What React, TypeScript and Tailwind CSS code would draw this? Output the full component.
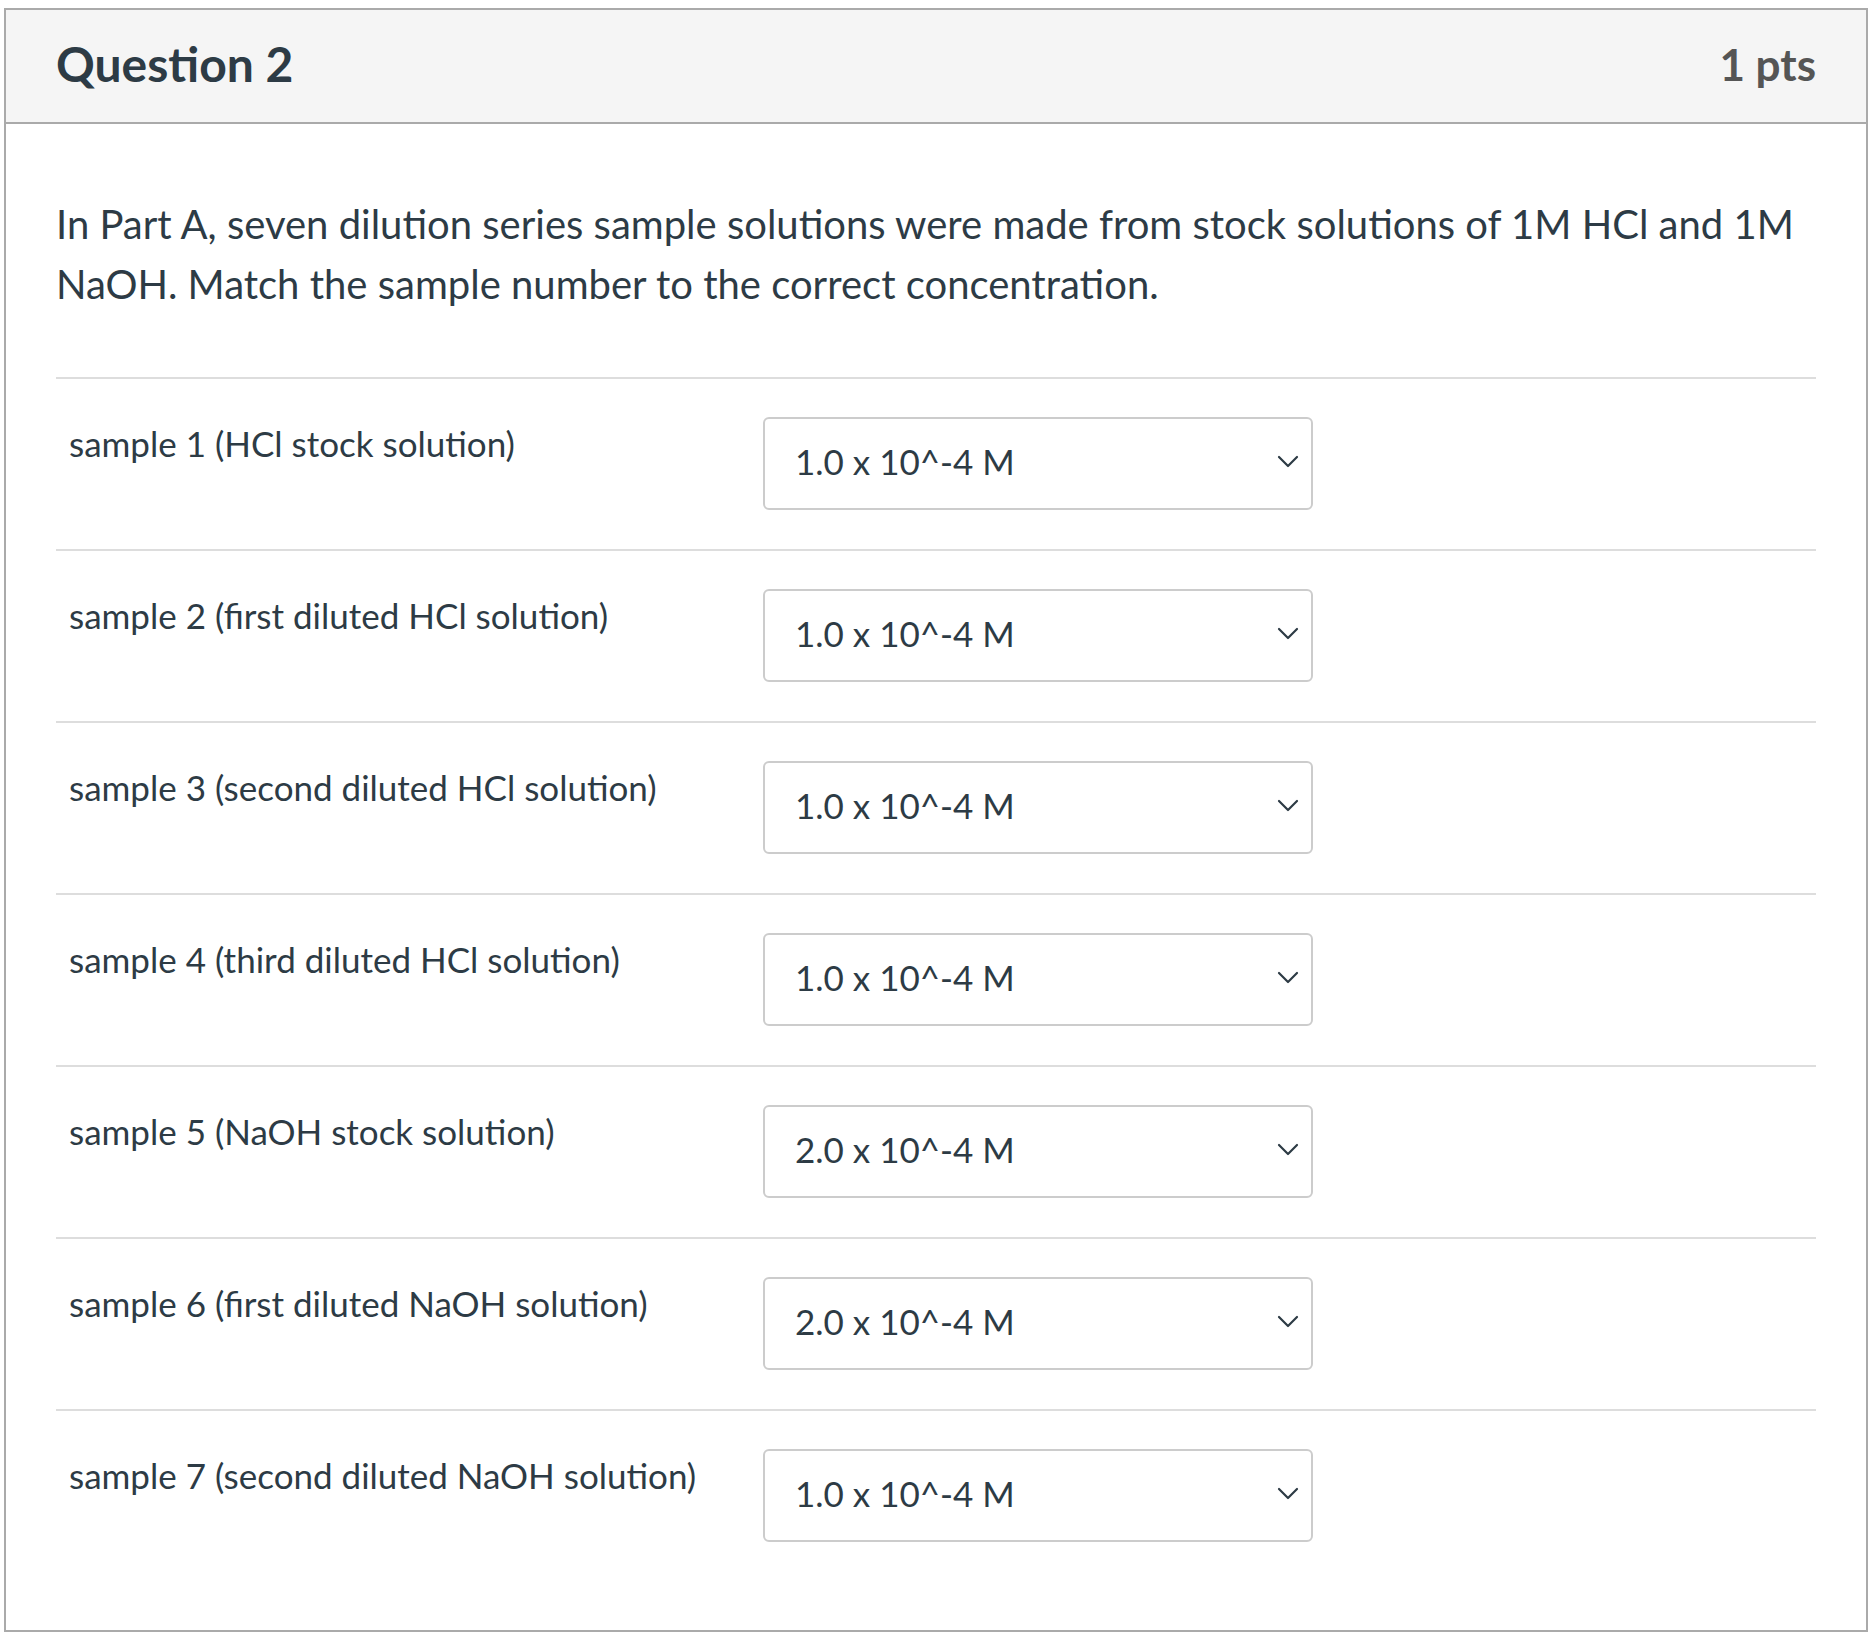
import React from "react";

const rows: { label: string; value: string }[] = [
  { label: "sample 1 (HCl stock solution)", value: "1.0 x 10^-4 M" },
  { label: "sample 2 (first diluted HCl solution)", value: "1.0 x 10^-4 M" },
  { label: "sample 3 (second diluted HCl solution)", value: "1.0 x 10^-4 M" },
  { label: "sample 4 (third diluted HCl solution)", value: "1.0 x 10^-4 M" },
  { label: "sample 5 (NaOH stock solution)", value: "2.0 x 10^-4 M" },
  { label: "sample 6 (first diluted NaOH solution)", value: "2.0 x 10^-4 M" },
  { label: "sample 7 (second diluted NaOH solution)", value: "1.0 x 10^-4 M" },
];

function Chevron() {
  return (
    <svg width="22" height="13" viewBox="0 0 22 13" fill="none" className="shrink-0">
      <polyline points="2,2 11,11 20,2" stroke="#2d3b45" strokeWidth="2.2" strokeLinecap="round" strokeLinejoin="round" />
    </svg>
  );
}

export default function App() {
  return (
    <div className="bg-white w-[1868px] min-h-[1636px] pt-[8px] pl-[4px]" style={{ fontFamily: "Lato, 'Open Sans', sans-serif" }}>
      <div className="w-[1864px] border-2 border-[#aaaaaa] text-[#2d3b45]">
        <div className="h-[114px] bg-[#f5f5f5] border-b-2 border-[#aaaaaa] flex items-center justify-between px-[50px] pb-[5px]">
          <h2 className="text-[48px] font-bold leading-none text-[#2d3b45]">Question 2</h2>
          <div className="text-[44px] font-bold leading-none text-[#555555]">1 pts</div>
        </div>
        <div className="px-[50px] pt-[70px] pb-[49px]">
          <p className="text-[40px] leading-[60px] text-[#2d3b45]">
            In Part A, seven dilution series sample solutions were made from stock solutions of 1M HCl and 1M NaOH. Match the sample number to the correct concentration.
          </p>
          <div className="mt-[63px]">
            {rows.map((r, i) => (
              <div key={i} className="grid grid-cols-[707px_550px] border-t-2 border-[#dddddd] pt-[38px] pb-[39px]">
                <div className="pl-[13px] text-[35px] leading-[52px] text-[#2d3b45]">{r.label}</div>
                <div className="h-[93px] border-2 border-[#cccccc] rounded-[6px] flex items-center justify-between pl-[30px] pr-[12px] pb-[4px] bg-white">
                  <span className="text-[35px] leading-none text-[#2d3b45]">{r.value}</span>
                  <Chevron />
                </div>
              </div>
            ))}
          </div>
        </div>
      </div>
    </div>
  );
}
